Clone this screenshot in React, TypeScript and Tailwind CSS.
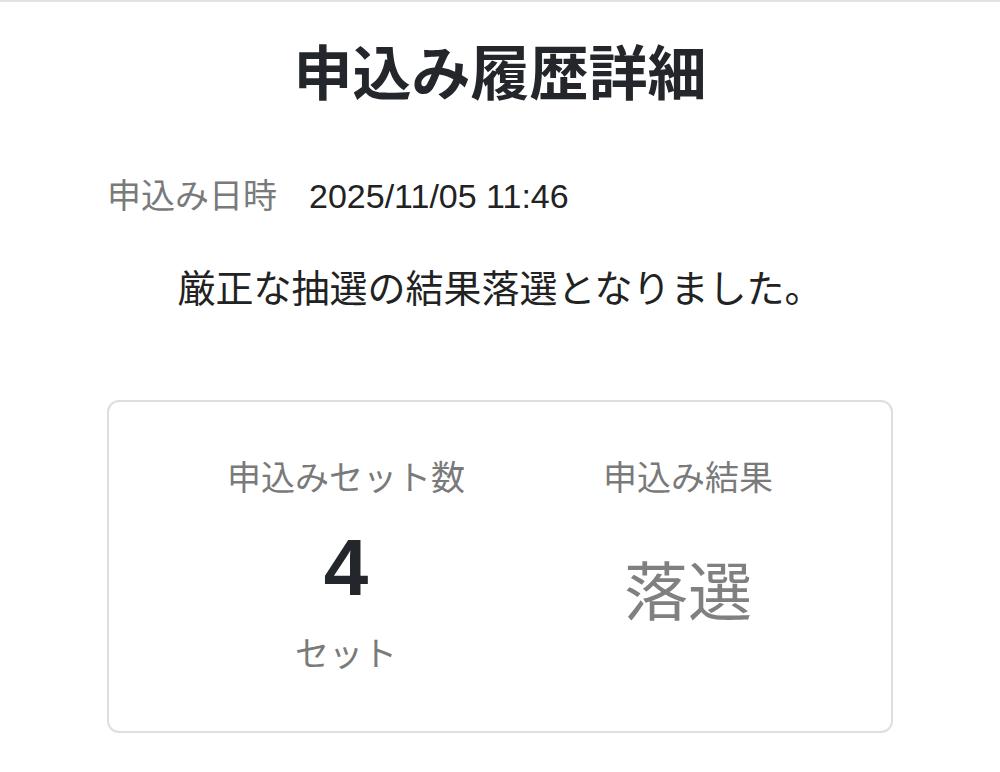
import React from 'react';

const font = { fontFamily: '"Liberation Sans", "Noto Sans CJK JP", sans-serif' };

export default function App() {
  return (
    <div className="min-h-[772px] w-full bg-white" style={font}>
      {/* top hairline */}
      <div className="h-[2px] w-full bg-[#e2e2e2]" />

      <h1 className="mt-[37px] text-center text-[59px] leading-[72px] font-bold text-[#23272b]">
        申込み履歴詳細
      </h1>

      {/* 申込み日時 */}
      <div className="mt-[65px] flex items-center pl-[107px] text-[34px] leading-[41px]">
        <span className="text-[#7a7a7a]">申込み日時</span>
        <span className="ml-[32px] text-[#222]">2025/11/05 11:46</span>
      </div>

      <p className="mt-[50px] text-center text-[38px] leading-[45px] text-[#222]">
        厳正な抽選の結果落選となりました。
      </p>

      {/* 結果カード */}
      <div className="mx-[107px] mt-[88px] flex h-[333px] justify-center gap-[138px] rounded-[12px] border-2 border-[#dedede] pt-[56px]">
        <div className="flex flex-col items-center">
          <span className="text-[34px] leading-[41px] text-[#7a7a7a]">申込みセット数</span>
          <span className="mt-[29px] text-[80px] leading-[80px] font-bold text-[#23272b]">4</span>
          <span className="mt-[26px] text-[34px] leading-[41px] text-[#7a7a7a]">セット</span>
        </div>
        <div className="flex flex-col items-center">
          <span className="text-[34px] leading-[41px] text-[#7a7a7a]">申込み結果</span>
          <span className="mt-[56px] text-[64px] leading-[77px] text-[#808080]">落選</span>
        </div>
      </div>
    </div>
  );
}
